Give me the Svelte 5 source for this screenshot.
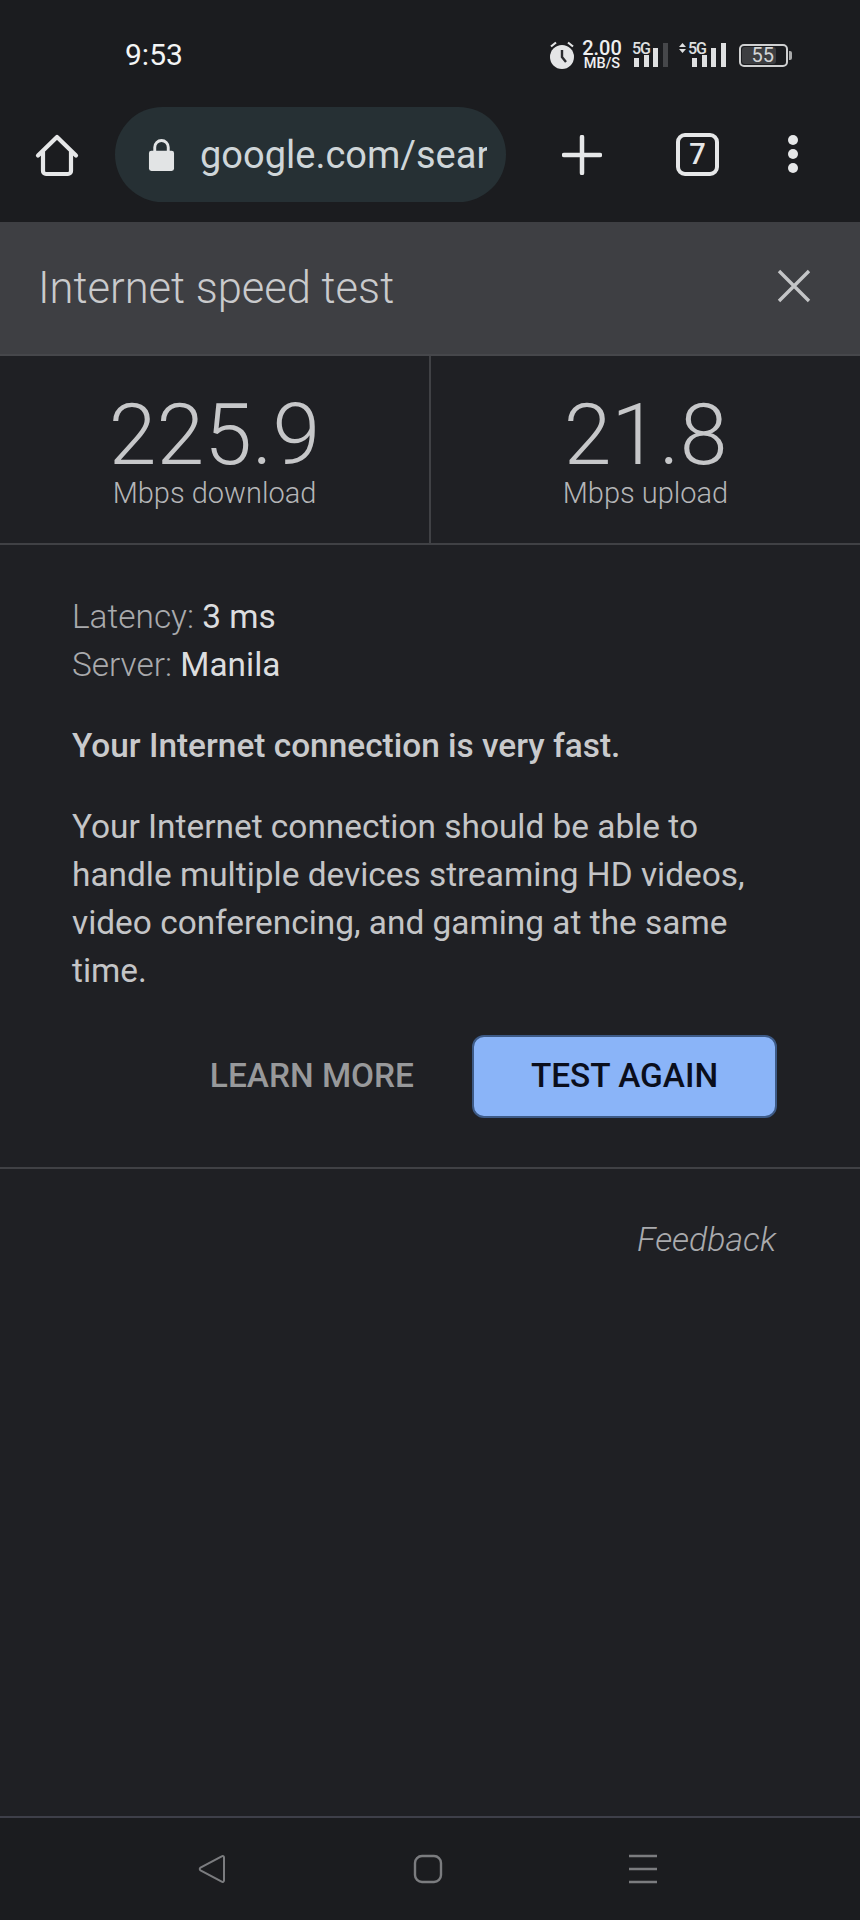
<script lang="ts">
  const stats = [
    { value: '225.9', label: 'Mbps download' },
    { value: '21.8', label: 'Mbps upload' }
  ];
</script>

<div class="page">
  <header class="chrome">
    <div class="status">
      <span class="time">9:53</span>
      <div class="status-icons">
        <svg class="alarm" width="26" height="30" viewBox="2 0 26 30">
          <circle cx="15" cy="17" r="12" fill="#e4e5e6" />
          <path d="M15 10v7l4 5" fill="none" stroke="#2a2b2e" stroke-width="2.4" />
          <path d="M4 6.500l5-4M26 6.500l-5-4" fill="none" stroke="#e4e5e6" stroke-width="2.2" />
        </svg>
        <div class="speed">
          <span class="speed-num">2.00</span>
          <span class="speed-unit">MB/S</span>
        </div>
        <svg class="sig-a" width="38" height="28" viewBox="0 0 38 28">
          <text x="1" y="13" class="sig-label">5G</text>
          <rect x="3" y="17" width="5" height="9" fill="#dfe0e1" />
          <rect x="13" y="14" width="5" height="12" fill="#dfe0e1" />
          <rect x="22" y="7" width="5" height="19" fill="#dfe0e1" />
          <rect x="32" y="2" width="5" height="24" fill="#46474a" />
        </svg>
        <svg class="sig-b" width="49" height="28" viewBox="0 0 49 28">
          <path d="M1 6l3.500-4 3.500 4zM1 8l3.500 4 3.500-4z" fill="#dfe0e1" />
          <text x="10" y="13" class="sig-label">5G</text>
          <rect x="14" y="17" width="5" height="9" fill="#dfe0e1" />
          <rect x="24" y="14" width="5" height="12" fill="#dfe0e1" />
          <rect x="33" y="7" width="5" height="19" fill="#dfe0e1" />
          <rect x="43" y="2" width="5" height="24" fill="#dfe0e1" />
        </svg>
        <div class="battery">
          <span class="battery-fill">55</span>
        </div>
        <span class="battery-cap"></span>
      </div>
    </div>

    <div class="toolbar">
      <svg class="home" width="44" height="44" viewBox="0 0 44 44">
        <path d="M3 22.500L22 4l19 18.500M8 19v19a3 3 0 0 0 3 3h22a3 3 0 0 0 3-3V19" fill="none" stroke="#e6e7e8" stroke-width="4.200" stroke-linecap="round" stroke-linejoin="round" />
      </svg>
      <div class="omnibox">
        <svg class="lock" width="27" height="34" viewBox="0 0 28 35">
          <path d="M7 15V9.500a7 7 0 0 1 14 0V15" fill="none" stroke="#e2e4e5" stroke-width="3" />
          <rect x="1" y="13" width="26" height="21" rx="2.500" fill="#e2e4e5" />
        </svg>
        <span class="url">google.com/search</span>
      </div>
      <svg class="plus" width="40" height="40" viewBox="0 0 40 40">
        <path d="M20 2v36M2 20h36" stroke="#e6e7e8" stroke-width="4.500" stroke-linecap="round" />
      </svg>
      <div class="tabs">7</div>
      <div class="dots"><i></i><i></i><i></i></div>
    </div>
  </header>

  <main>
    <div class="title-bar">
      <h1>Internet speed test</h1>
      <svg class="close" width="36" height="36" viewBox="0 0 36 36">
        <path d="M3 3l30 30M33 3L3 33" stroke="#c4c5c7" stroke-width="3.400" />
      </svg>
    </div>

    <div class="stats">
      {#each stats as stat}
        <div class="stat">
          <div class="stat-value">{stat.value}</div>
          <div class="stat-label">{stat.label}</div>
        </div>
      {/each}
    </div>

    <section class="result">
      <p class="meta"><span>Latency:</span> 3 ms<br /><span>Server:</span> Manila</p>
      <p class="verdict">Your Internet connection is very fast.</p>
      <p class="detail">Your Internet connection should be able to handle multiple devices streaming HD videos, video conferencing, and gaming at the same time.</p>
      <div class="actions">
        <button class="learn">LEARN MORE</button>
        <button class="again">TEST AGAIN</button>
      </div>
    </section>

    <div class="feedback">Feedback</div>
  </main>

  <nav>
    <svg width="30" height="30" viewBox="0 0 30 30">
      <path d="M27 3.500v23a1.500 1.500 0 0 1-2.300 1.200L3.500 16.300a1.500 1.500 0 0 1 0-2.600L24.700 2.300A1.500 1.500 0 0 1 27 3.500z" fill="none" stroke="#7b7c7f" stroke-width="2" />
    </svg>
    <svg width="30" height="30" viewBox="0 0 30 30">
      <rect x="2" y="2" width="26" height="26" rx="7" fill="none" stroke="#7b7c7f" stroke-width="2.400" />
    </svg>
    <svg width="30" height="30" viewBox="0 0 30 30">
      <path d="M1 2h28M1 15h28M1 28h28" stroke="#7b7c7f" stroke-width="2.400" />
    </svg>
  </nav>
</div>

<style>
  :global(body) {
    margin: 0;
    background: #1b1c1f;
  }

  .page {
    display: flex;
    flex-direction: column;
    height: 1920px;
    font-family: Roboto, "Liberation Sans", sans-serif;
    background: #1f2024;
    overflow: hidden;
  }

  /* Status bar and browser toolbar */
  .chrome {
    height: 222px;
    flex: none;
    background: #1b1c1f;
  }

  .status {
    display: flex;
    justify-content: space-between;
    align-items: center;
    height: 107px;
    padding: 3px 68px 0 125px;
    box-sizing: border-box;
  }

  .time {
    font-size: 30px;
    color: #f4f5f5;
    line-height: 1;
  }

  .status-icons {
    display: flex;
    align-items: center;
    height: 30px;
  }

  .alarm {
    margin-right: 5px;
  }

  .speed {
    display: flex;
    flex-direction: column;
    align-items: center;
    width: 44px;
    margin-right: 7px;
    color: #eeeff0;
    font-weight: 500;
  }

  .speed-num {
    font-size: 20px;
    line-height: 17px;
  }

  .speed-unit {
    font-size: 14.500px;
    line-height: 14px;
  }

  .sig-a {
    margin-right: 9px;
  }

  .sig-b {
    margin-right: 12px;
  }

  .sig-a,
  .sig-b {
    overflow: visible;
  }

  .sig-label {
    font-family: Roboto, sans-serif;
    font-size: 16px;
    font-weight: 500;
    letter-spacing: -1px;
    fill: #dfe0e1;
  }

  .battery {
    width: 43px;
    height: 17px;
    padding: 1px;
    border: 2px solid #cfd0d1;
    border-radius: 5px;
  }

  .battery-fill {
    display: block;
    width: 34px;
    height: 17px;
    padding-right: 2px;
    box-sizing: border-box;
    background: #3d3e41;
    border-radius: 3px;
    color: #d4d5d6;
    font-size: 20px;
    line-height: 17px;
    text-align: right;
  }

  .battery-cap {
    width: 3px;
    height: 9px;
    margin-left: 1px;
    background: #a9aaab;
    border-radius: 0 2px 2px 0;
  }

  .toolbar {
    display: flex;
    align-items: flex-start;
  }

  .home {
    flex: none;
    margin: 26px 0 0 35px;
  }

  .omnibox {
    flex: none;
    display: flex;
    align-items: center;
    width: 391px;
    height: 95px;
    margin-left: 36px;
    padding: 0 19px 0 33px;
    box-sizing: border-box;
    background: #263034;
    border-radius: 48px;
  }

  .lock {
    flex: none;
    margin-right: 25px;
  }

  .url {
    overflow: hidden;
    white-space: nowrap;
    font-size: 38px;
    color: #cfd6d9;
  }

  .plus {
    flex: none;
    margin: 28px 0 0 56px;
  }

  .tabs {
    flex: none;
    width: 43px;
    height: 43px;
    margin: 26px 0 0 74px;
    box-sizing: border-box;
    border: 4px solid #e6e7e8;
    border-radius: 9px;
    color: #e6e7e8;
    font-size: 29px;
    font-weight: 500;
    line-height: 35px;
    text-align: center;
  }

  .dots {
    flex: none;
    display: flex;
    flex-direction: column;
    gap: 4px;
    margin: 28px 0 0 69px;
  }

  .dots i {
    display: block;
    width: 10px;
    height: 10px;
    border-radius: 50%;
    background: #e6e7e8;
  }

  /* Speed test card */
  main {
    flex: 1;
  }

  .title-bar {
    display: flex;
    justify-content: space-between;
    align-items: center;
    height: 134px;
    padding: 0 48px 0 38px;
    box-sizing: border-box;
    background: #3e3f43;
    border-bottom: 2px solid #46474b;
  }

  h1 {
    margin: 0;
    font-size: 43.500px;
    font-weight: 300;
    color: #c9cacc;
  }

  .close {
    margin-bottom: 4px;
  }

  .stats {
    display: grid;
    grid-template-columns: 431px 1fr;
    height: 189px;
    box-sizing: border-box;
    border-bottom: 2px solid #404145;
  }

  .stat {
    text-align: center;
    padding-top: 44px;
  }

  .stat:first-child {
    border-right: 2px solid #404145;
  }

  .stat-value {
    font-size: 86px;
    font-weight: 300;
    line-height: 70px;
    color: #c6c7c9;
  }

  .stat-label {
    margin-top: 6px;
    font-size: 29px;
    font-weight: 300;
    line-height: 34px;
    color: #b4b5b7;
  }

  .result {
    padding: 48px 83px 0 72px;
    height: 624px;
    box-sizing: border-box;
    border-bottom: 2px solid #404145;
    font-size: 33.400px;
    line-height: 48px;
    color: #c4c5c7;
  }

  p {
    margin: 0 0 33px;
  }

  .meta {
    color: #dcdddf;
  }

  .meta span {
    font-weight: 300;
    color: #a9aaad;
  }

  .verdict {
    font-weight: 500;
    color: #c9cacc;
  }

  .actions {
    display: flex;
    justify-content: flex-end;
    align-items: center;
    gap: 58px;
    margin-top: 40px;
  }

  button {
    font-family: inherit;
    font-size: 33.400px;
    font-weight: 500;
    border: none;
    padding: 0;
  }

  .learn {
    background: none;
    color: #98999b;
    padding-bottom: 3px;
  }

  .again {
    width: 305px;
    height: 83px;
    padding-bottom: 2px;
    border: 2px solid #3d5a86;
    border-radius: 12px;
    background: #8ab4f8;
    color: #0a0e1c;
  }

  .feedback {
    padding: 51px 84px 0 0;
    text-align: right;
    font-size: 33.800px;
    font-style: italic;
    font-weight: 300;
    line-height: 40px;
    color: #a9aaad;
  }

  /* Android navigation bar */
  nav {
    flex: none;
    display: flex;
    justify-content: space-between;
    height: 104px;
    padding: 36px 202px 0 197px;
    box-sizing: border-box;
    background: #1b1c1f;
    border-top: 2px solid #3e3f49;
  }
</style>
